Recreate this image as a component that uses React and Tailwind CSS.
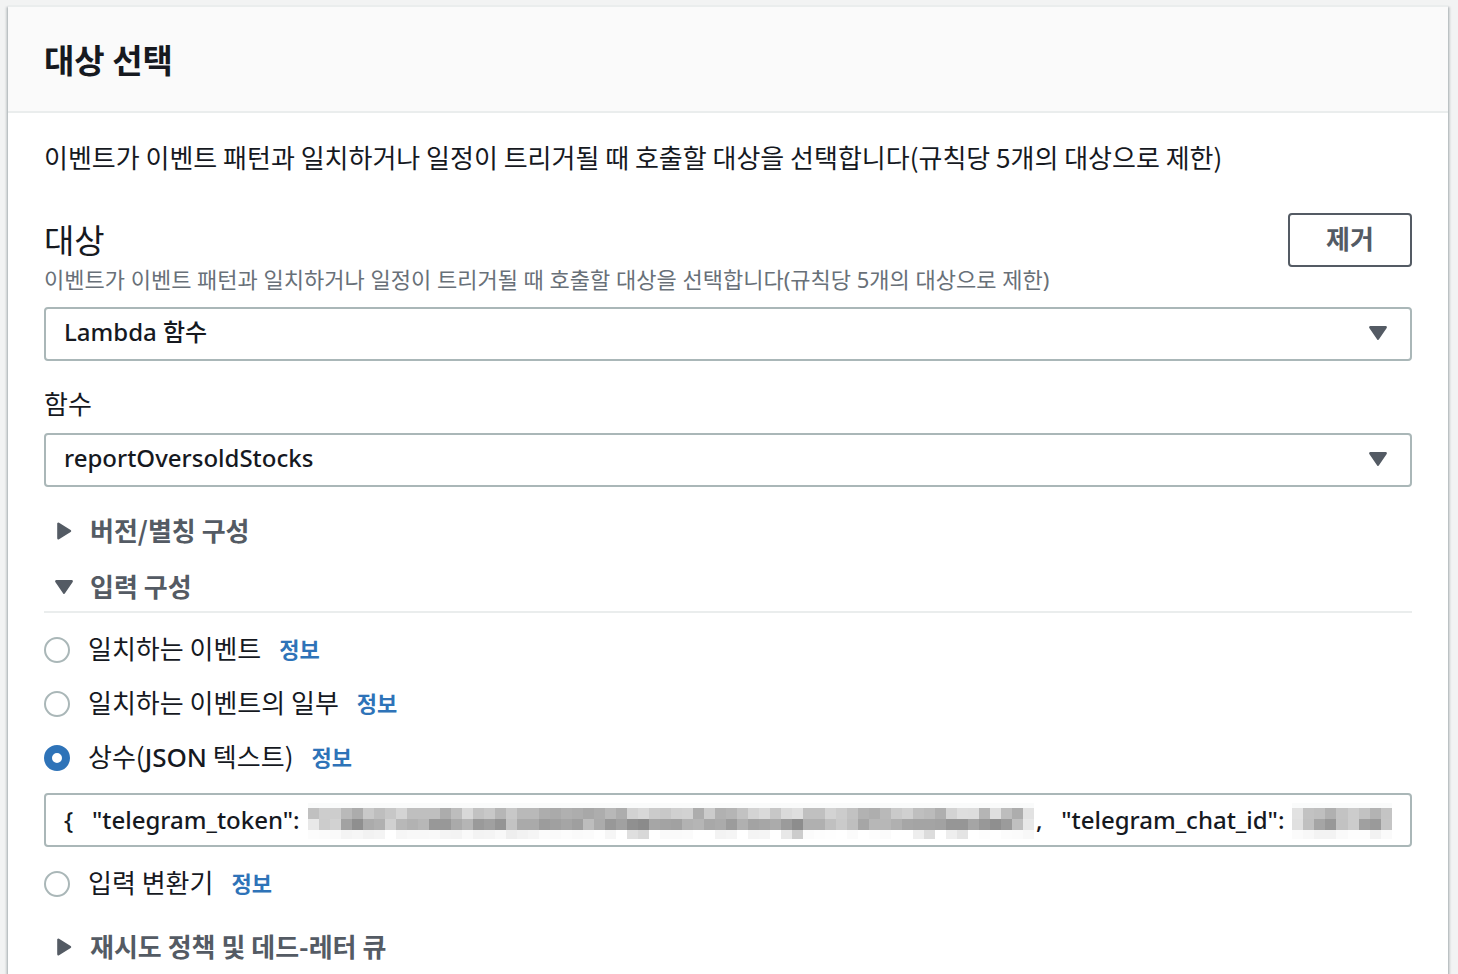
import { useState } from 'react';

const TOKEN_MASK = {
    top: 'c0 cd cd b9 ac c9 be c7 d4 bf bf bf ac bd d8 c2 c8 b6 c8 b9 b9 ad aa b0 ad a8 ad b8 ad d2 d8 cb c8 d0 d2 ad cb b1 b5 c2 d3 da c7 da df c0 c0 d3 cc c2 b2 ae b9 ca d0 bf bb af d3 de dd b5 df bd ad e2',
    middle: 'e8 cc d2 a2 8f ab b0 d0 b8 b2 b7 98 98 aa b5 9a a0 94 c3 aa aa 9c a0 a5 9f bd ab 98 a1 90 8b a6 a3 a1 b2 b5 a8 ab 9c b0 a3 a6 ab 9b 8d b0 b0 c0 ca bf a6 b7 b7 b0 a6 a4 a4 a2 96 96 a5 98 8f 9b c0 e8',
    bottom: 'fc fb fa f4 f6 f2 f4 ff f6 f8 f8 f9 f4 f3 f9 f3 f4 f8 ee f2 f5 fb fa fc fa fb fe f6 ff df d8 ff fa fa fb ff ff f3 f5 ff f4 f5 ff e8 cc fb fd fe ff fb ff fd fb ff ff ee dc ff ee e4 ff fd ff fc fb f8'
};

const CHAT_ID_MASK = {
    top: 'e2 c2 bf b0 c3 cc c2 b3 c4',
    middle: 'e0 c0 a5 98 c2 cc a0 9a c5',
    bottom: 'fb f8 f3 f3 fa fd fd f2 fa'
};

// value of the constant, the secret parts are left blank under the mosaic
const JSON_VALUE = `{\u00a0\u00a0\u00a0"telegram_token":${'\u00a0'.repeat(118)},\u00a0\u00a0\u00a0"telegram_chat_id":`;

const Mosaic = ({ mask, className }) => {
    const rows = [
        { cells: mask.top.split(' '), y: 5, height: 11 },
        { cells: mask.middle.split(' '), y: 16, height: 11 },
        { cells: mask.bottom.split(' '), y: 27, height: 9 }
    ];
    const width = rows[0].cells.length * 11;

    return (
        <svg
            className={className}
            viewBox={`0 0 ${width} 36`}
            preserveAspectRatio="none"
            shapeRendering="crispEdges"
            aria-hidden="true"
        >
            <rect width={width} height="5" fill="#fafbfb" />
            {rows.map((row) =>
                row.cells.map((cell, index) => (
                    <rect
                        key={`${row.y}-${index}`}
                        x={index * 11}
                        y={row.y}
                        width="11"
                        height={row.height}
                        fill={`#${cell}${cell}${cell}`}
                    />
                ))
            )}
        </svg>
    );
};

const CaretDown = ({ className }) => (
    <svg className={className} width="20" height="16" viewBox="0 0 20 16" aria-hidden="true">
        <path d="M2.3 2.3h15.4L10 13.7z" fill="#545b64" stroke="#545b64" strokeWidth="2.4" strokeLinejoin="round" />
    </svg>
);

const CaretRight = () => (
    <svg width="20" height="20" viewBox="0 0 20 20" aria-hidden="true">
        <path d="M4.4 2.7v14.6L16 10z" fill="#545b64" stroke="#545b64" strokeWidth="2.4" strokeLinejoin="round" />
    </svg>
);

const SelectBox = ({ id, label, options }) => (
    <div className="relative">
        <select
            id={id}
            aria-label={label}
            className="block w-full h-[54px] appearance-none rounded-sm border-2 border-[#aab7b8] bg-white pl-[18px] pr-16 pb-1 font-['Noto_Sans','Noto_Sans_CJK_KR',sans-serif] text-2xl leading-9 font-medium text-[#16191f]"
        >
            {options.map((option) => (
                <option key={option}>{option}</option>
            ))}
        </select>
        <CaretDown className="pointer-events-none absolute right-6 top-[18px]" />
    </div>
);

const Expander = ({ title, open, className }) => (
    <button
        type="button"
        aria-expanded={open}
        className={`flex w-full items-center gap-4 pl-2.5 text-left text-[26px] leading-[34px] font-bold text-[#545b64] ${className}`}
    >
        {open ? <CaretDown /> : <CaretRight />}
        <span className="pb-0.5">{title}</span>
    </button>
);

const InputOption = ({ id, label, checked, onSelect }) => (
    <div className="flex h-[38px] items-center">
        <input
            type="radio"
            id={id}
            name="inputType"
            checked={checked}
            onChange={() => onSelect(id)}
            className="size-[26px] shrink-0 appearance-none rounded-full border-2 border-[#aab7b8] bg-white checked:border-8 checked:border-[#2e73b8]"
        />
        <label htmlFor={id} className="pl-[18px] pb-1 text-[26px] leading-[34px]">
            {label}
        </label>
        <a href="#info" className="pl-[18px] pb-1 text-[22px] leading-[34px] font-bold text-[#2e73b8]">
            정보
        </a>
    </div>
);

const App = () => {
    const [inputType, setInputType] = useState('constant');

    return (
        <div className="flex min-h-screen flex-col bg-[#f2f3f3] px-2 pt-[5px] pr-2.5 font-['Noto_Sans_CJK_KR','Noto_Sans',sans-serif] text-[#16191f]">
            <section className="flex-1 border-t-2 border-[#eaeded] bg-white shadow-[0_2px_2px_rgba(0,28,36,0.3),2px_2px_2px_rgba(0,28,36,0.15),-2px_2px_2px_rgba(0,28,36,0.15)]">
                <header className="border-b-2 border-[#eaeded] bg-[#fafafa] px-9 py-[26px]">
                    <h2 className="text-[33px] leading-[52px] font-bold">대상 선택</h2>
                </header>

                <div className="px-9 pt-[26px] pb-2">
                    <p className="text-[26px] leading-9">
                        이벤트가 이벤트 패턴과 일치하거나 일정이 트리거될 때 호출할 대상을 선택합니다(규칙당 5개의 대상으로 제한)
                    </p>

                    {/* Target */}
                    <div className="mt-[38px] flex items-start justify-between">
                        <div>
                            <h3 className="text-[33px] leading-[52px]">대상</h3>
                            <p className="font-['Noto_Sans','Noto_Sans_CJK_KR',sans-serif] text-[22px] leading-7 text-[#687078]">
                                이벤트가 이벤트 패턴과 일치하거나 일정이 트리거될 때 호출할 대상을 선택합니다(규칙당 5개의 대상으로 제한)
                            </p>
                        </div>
                        <button
                            type="button"
                            className="h-[54px] w-[124px] shrink-0 rounded-sm border-2 border-[#545b64] bg-white pb-1 text-[26px] leading-9 font-bold text-[#545b64]"
                        >
                            제거
                        </button>
                    </div>
                    <div className="mt-3.5">
                        <SelectBox id="target" label="대상" options={['Lambda 함수']} />
                    </div>

                    {/* Function */}
                    <label htmlFor="function" className="mt-6 mb-3 block text-[26px] leading-9">
                        함수
                    </label>
                    <SelectBox id="function" options={['reportOversoldStocks']} />

                    <Expander title="버전/별칭 구성" open={false} className="mt-[26px]" />
                    <Expander title="입력 구성" open={true} className="mt-5 border-b-2 border-[#eaeded] pb-1.5" />

                    {/* Input type */}
                    <div className="mt-[18px] flex flex-col gap-4">
                        <InputOption
                            id="matched"
                            label="일치하는 이벤트"
                            checked={inputType === 'matched'}
                            onSelect={setInputType}
                        />
                        <InputOption
                            id="part"
                            label="일치하는 이벤트의 일부"
                            checked={inputType === 'part'}
                            onSelect={setInputType}
                        />
                        <InputOption
                            id="constant"
                            label={
                                <>
                                    상수(<span className="font-['Noto_Sans',sans-serif] font-medium">JSON</span> 텍스트)
                                </>
                            }
                            checked={inputType === 'constant'}
                            onSelect={setInputType}
                        />
                        <div className="relative mb-0.5">
                            <input
                                type="text"
                                aria-label="상수(JSON 텍스트)"
                                defaultValue={JSON_VALUE}
                                className="block h-[54px] w-full rounded-sm border-2 border-[#aab7b8] bg-white px-[18px] pb-0.5 font-['Noto_Sans','Noto_Sans_CJK_KR',sans-serif] text-2xl leading-9 font-medium"
                            />
                            <Mosaic mask={TOKEN_MASK} className="absolute left-[264px] top-[10px] h-9 w-[726px]" />
                            <Mosaic mask={CHAT_ID_MASK} className="absolute right-5 top-[10px] h-9 w-[100px]" />
                        </div>
                        <InputOption
                            id="transformer"
                            label="입력 변환기"
                            checked={inputType === 'transformer'}
                            onSelect={setInputType}
                        />
                    </div>

                    <Expander title="재시도 정책 및 데드-레터 큐" open={false} className="mt-[26px]" />
                </div>
            </section>
        </div>
    );
};

export default App;
